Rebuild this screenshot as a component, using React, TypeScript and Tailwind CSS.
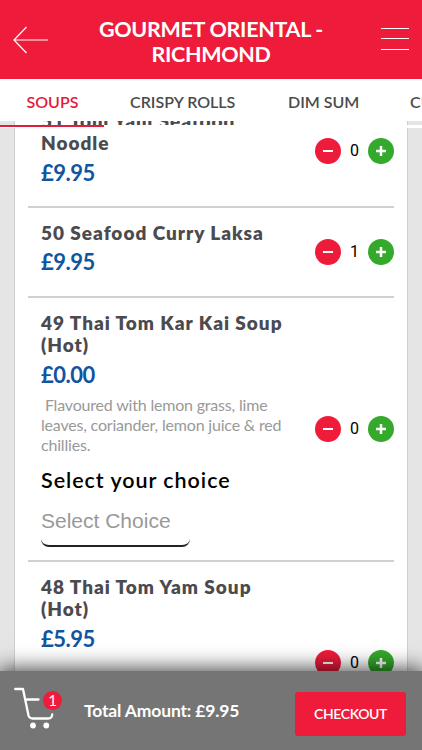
import type { ReactNode } from "react";

const tabs = [
  { label: "SOUPS", cls: "ml-[26.500px] w-[103.500px] text-[#e4193a]" },
  { label: "CRISPY ROLLS", cls: "w-[158px] text-[#4a4a4a]" },
  { label: "DIM SUM", cls: "w-[122px] text-[#4a4a4a]" },
  { label: "CURRY", cls: "text-[#4a4a4a]" },
];

function Counter({ value }: { value: number }) {
  return (
    <div className="flex w-[79px] shrink-0 items-center justify-between">
      <button className="flex size-[26px] items-center justify-center rounded-full bg-[#ee1b3b]">
        <span className="h-[2.5px] w-[10px] bg-white" />
      </button>
      <span className="font-['Roboto',sans-serif] text-[16px] leading-5 text-black">{value}</span>
      <button className="flex size-[26px] items-center justify-center rounded-full bg-[#35a92b]">
        <svg width="10" height="10" viewBox="0 0 10 10" stroke="#fff" strokeWidth="2.5">
          <path d="M5 0v10M0 5h10" />
        </svg>
      </button>
    </div>
  );
}

function Item({ title, price, count, cls, children }: { title: string; price: string; count: number; cls: string; children?: ReactNode }) {
  return (
    <section className={"mx-[13px] flex items-center justify-between border-b-2 border-[#d0d0d0] " + cls}>
      <div className="w-[260px] self-stretch pl-[13px] pt-[14px]">
        <h2 className="text-[19px] leading-[22.4px] font-extrabold tracking-[0.97px] text-[#4b4b4f]">{title}</h2>
        <p className="mt-[4px] text-[22px] leading-[28px] font-bold tracking-[-0.5px] text-[#10559f]">{price}</p>
        {children}
      </div>
      <Counter value={count} />
    </section>
  );
}

export default function App() {
  return (
    <div className="flex h-[750px] w-[422px] flex-col overflow-hidden bg-[#e5e5e5] font-['Lato',sans-serif]">
      <header className="flex h-[79px] shrink-0 items-center justify-between bg-[#ee1b3b] pr-[13px] pl-[13px] text-white">
        <svg width="35" height="28" viewBox="0 0 35 28" fill="none" stroke="#fff" strokeWidth="1.2">
          <path d="M13.5 1 1 14l12.500 13M1 14h34" />
        </svg>
        <h1 className="mt-[5px] mr-[7px] w-[260px] text-center text-[21.500px] leading-[25px] font-bold tracking-[-0.3px]">GOURMET ORIENTAL - RICHMOND</h1>
        <div className="mt-[-2px] flex w-7 flex-col gap-[9.500px]">
          <span className="h-px bg-white" />
          <span className="h-px bg-white" />
          <span className="h-px bg-white" />
        </div>
      </header>
      <nav className="flex h-[42px] shrink-0 items-center overflow-hidden bg-white pt-[4px] text-[16px] font-semibold whitespace-nowrap">
        {tabs.map((t) => (
          <span key={t.label} className={"shrink-0 " + t.cls}>{t.label}</span>
        ))}
      </nav>
      <main className="relative h-[550px] shrink-0 overflow-hidden px-[14px]">
        <div className="absolute inset-x-0 top-[4px] h-[3px] bg-white">
          <div className="h-[2px] w-[103.500px] bg-[#df1d3c]" />
        </div>
        <div className="-mt-[25px] border-x border-[#cfcfcf] bg-white">
          <Item title="51 Tom Yam Seafood Noodle" price="£9.95" count={0} cls="h-[112px]" />
          <Item title="50 Seafood Curry Laksa" price="£9.95" count={1} cls="h-[90px]" />
          <Item title="49 Thai Tom Kar Kai Soup (Hot)" price="£0.00" count={0} cls="h-[264px]">
            <p className="mt-[6px] text-[16px] leading-[20px] tracking-[-0.19px] whitespace-pre-wrap text-[#999]">{"\u00a0Flavoured with lemon grass, lime leaves, coriander, lemon juice & red chillies."}</p>
            <h3 className="mt-[12px] text-[21.500px] leading-[26px] font-semibold tracking-[0.96px] text-black">Select your choice</h3>
            <div className="mt-[8px] flex h-[46px] w-[149px] items-center rounded-[8px] border-b-2 border-[#222] pb-[5px] font-['Liberation_Sans',sans-serif] text-[21px] whitespace-nowrap text-[#999]">Select Choice</div>
          </Item>
          <Item title="48 Thai Tom Yam Soup (Hot)" price="£5.95" count={0} cls="h-[204px]" />
        </div>
      </main>
      <footer className="relative flex h-[79px] shrink-0 items-center bg-[#757575] text-white shadow-[0_0_20px_2px_rgba(0,0,0,0.75)]">
        <div className="relative ml-[14px] size-[48px]">
          <svg width="48" height="50" viewBox="0 0 48 50" fill="none" stroke="#fff" strokeWidth="2.300" strokeLinecap="round" strokeLinejoin="round">
            <path d="M1.200 2H9l5.500 26.500q1 3 4 3H34q4 0 4.200-4M13 12.500h11.500" />
            <circle cx="19" cy="38.500" r="2.900" fill="#fff" stroke="none" />
            <circle cx="32.300" cy="38.500" r="2.900" fill="#fff" stroke="none" />
          </svg>
          <span className="absolute top-[4px] left-[29px] flex size-[19px] items-center justify-center rounded-full bg-[#ee1b3b] text-[15px]">1</span>
        </div>
        <p className="ml-[22px] w-[211px] text-[17.500px] leading-6 font-bold tracking-[-0.15px] whitespace-nowrap">Total Amount: £9.95</p>
        <button className="mt-[6px] h-[44px] w-[111px] rounded-[3px] bg-[#ee1b3b] text-[14px] font-semibold tracking-[-0.4px]">CHECKOUT</button>
      </footer>
    </div>
  );
}
